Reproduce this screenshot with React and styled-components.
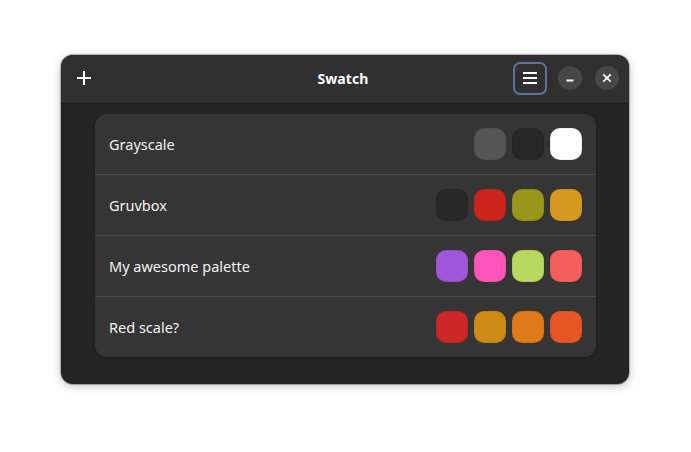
import React from "react";
import styled, { createGlobalStyle } from "styled-components";

const GlobalStyle = createGlobalStyle`
  html, body {
    margin: 0;
    padding: 0;
    background: #ffffff;
  }
  body {
    font-family: "Noto Sans", "Open Sans", sans-serif;
  }
`;

const palettes = [
  { name: "Grayscale", colors: ["#555555", "#272727", "#ffffff"] },
  { name: "Gruvbox", colors: ["#282828", "#cc241d", "#98971a", "#d79921"] },
  { name: "My awesome palette", colors: ["#a056d8", "#ff55bb", "#b7d95f", "#f45f5d"] },
  { name: "Red scale?", colors: ["#cd2628", "#cd8b16", "#e07a18", "#e65526"] },
];

const Page = styled.div`
  width: 691px;
  height: 452px;
  padding: 55px 0 0 61px;
  box-sizing: border-box;
`;

const Window = styled.div`
  width: 568px;
  height: 329px;
  border-radius: 12px;
  background: #242424;
  overflow: hidden;
  display: flex;
  flex-direction: column;
  box-shadow: 0 0 0 1px rgba(0, 0, 0, 0.25), 0 2px 10px rgba(0, 0, 0, 0.25);
`;

const HeaderBar = styled.div`
  height: 46px;
  flex-shrink: 0;
  background: #303030;
  border-bottom: 1px solid #3a3a3a;
  display: grid;
  grid-template-columns: 1fr auto 1fr;
  align-items: center;
  padding: 0 10px 0 6px;
`;

const Start = styled.div`
  display: flex;
  align-items: center;
`;

const End = styled.div`
  display: flex;
  align-items: center;
  justify-content: flex-end;
`;

const Title = styled.div`
  color: #ffffff;
  font-weight: 700;
  font-size: 14px;
  letter-spacing: 0.1px;
`;

const FlatButton = styled.button`
  width: 34px;
  height: 33px;
  margin: 0;
  padding: 0;
  border-radius: 7px;
  background: transparent;
  border: 2px solid ${(p) => (p.$focused ? "#5a7597" : "transparent")};
  box-sizing: border-box;
  display: flex;
  align-items: center;
  justify-content: center;
  color: #ffffff;
`;

const WindowButton = styled.button`
  width: 24px;
  height: 24px;
  margin-left: ${(p) => p.$gap || 0}px;
  padding: 0;
  border: none;
  border-radius: 50%;
  background: #474747;
  display: flex;
  align-items: center;
  justify-content: center;
  color: #ffffff;
`;

const Content = styled.div`
  flex: 1;
  padding: 12px 33px 0 34px;
`;

const List = styled.div`
  background: #353535;
  border-radius: 12px;
  box-shadow: 0 1px 3px rgba(0, 0, 0, 0.25);
  overflow: hidden;
`;

const Row = styled.div`
  height: 60px;
  display: flex;
  align-items: center;
  justify-content: space-between;
  padding: 0 14px;
  & + & {
    border-top: 1px solid #4a4a4a;
  }
`;

const Label = styled.span`
  color: #f2f2f2;
  font-size: 14.5px;
`;

const Swatches = styled.div`
  display: flex;
  gap: 6px;
`;

const Swatch = styled.div`
  width: 32px;
  height: 32px;
  border-radius: 10px;
  background: ${(p) => p.$color};
  box-shadow: inset 0 0 0 1px rgba(0, 0, 0, 0.06);
`;

const PlusIcon = () => (
  <svg width="16" height="16" viewBox="0 0 16 16">
    <path d="M8 1v14M1 8h14" stroke="#fff" strokeWidth="2" fill="none" />
  </svg>
);

const MenuIcon = () => (
  <svg width="16" height="16" viewBox="0 0 16 16">
    <path d="M1 3h14M1 8h14M1 13h14" stroke="#fff" strokeWidth="2" fill="none" />
  </svg>
);

const MinIcon = () => (
  <svg width="10" height="10" viewBox="0 0 10 10">
    <path d="M1.5 7.5h7" stroke="#fff" strokeWidth="1.8" fill="none" />
  </svg>
);

const CloseIcon = () => (
  <svg width="10" height="10" viewBox="0 0 10 10">
    <path d="M1.3 1.3l7.4 7.4M8.7 1.3l-7.4 7.4" stroke="#fff" strokeWidth="1.8" fill="none" />
  </svg>
);

export default function App() {
  return (
    <>
      <GlobalStyle />
      <Page>
        <Window>
          <HeaderBar>
            <Start>
              <FlatButton>
                <PlusIcon />
              </FlatButton>
            </Start>
            <Title>Swatch</Title>
            <End>
              <FlatButton $focused>
                <MenuIcon />
              </FlatButton>
              <WindowButton $gap={11}>
                <MinIcon />
              </WindowButton>
              <WindowButton $gap={13}>
                <CloseIcon />
              </WindowButton>
            </End>
          </HeaderBar>
          <Content>
            <List>
              {palettes.map((p) => (
                <Row key={p.name}>
                  <Label>{p.name}</Label>
                  <Swatches>
                    {p.colors.map((c, i) => (
                      <Swatch key={i} $color={c} />
                    ))}
                  </Swatches>
                </Row>
              ))}
            </List>
          </Content>
        </Window>
      </Page>
    </>
  );
}
